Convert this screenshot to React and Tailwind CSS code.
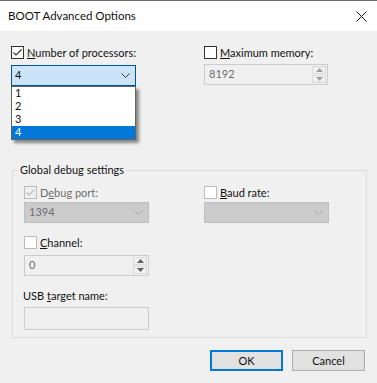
import React from 'react';

function Check({ checked = false, disabled = false }) {
  return (
    <span
      className={`w-[13px] h-[13px] shrink-0 border flex items-center justify-center ${
        disabled ? 'border-[#bcbcbc] bg-[#f0f0f0]' : 'border-[#333333] bg-white'
      }`}
    >
      {checked && (
        <svg width="11" height="11" viewBox="0 0 11 11">
          <path
            d="M1.5 5.5 L4 8 L9.5 2.5"
            fill="none"
            stroke={disabled ? '#bcbcbc' : '#333333'}
            strokeWidth="1.1"
          />
        </svg>
      )}
    </span>
  );
}

function LightCheck() {
  return <span className="w-[13px] h-[13px] shrink-0 border border-[#bcbcbc] bg-white" />;
}

function Chevron({ color = '#444444' }) {
  return (
    <svg width="9" height="5" viewBox="0 0 9 5">
      <path d="M0.5 0.5 L4.5 4.5 L8.5 0.5" fill="none" stroke={color} strokeWidth="1" />
    </svg>
  );
}

function SpinArrows({ color }) {
  return (
    <div className="w-[16px] h-full flex flex-col gap-[1px] p-[1px]">
      <div className="flex-1 border border-[#dadada] bg-[#f0f0f0] flex items-center justify-center">
        <svg width="7" height="4" viewBox="0 0 7 4">
          <path d="M0 4 L3.5 0 L7 4 Z" fill={color} />
        </svg>
      </div>
      <div className="flex-1 border border-[#dadada] bg-[#f0f0f0] flex items-center justify-center">
        <svg width="7" height="4" viewBox="0 0 7 4">
          <path d="M0 0 L3.5 4 L7 0 Z" fill={color} />
        </svg>
      </div>
    </div>
  );
}

function CheckRow({ children, check }) {
  return (
    <div className="h-[13px] flex items-center gap-[3px]">
      {check}
      <span className="leading-[13px]">{children}</span>
    </div>
  );
}

export default function App() {
  return (
    <div className="w-[377px] h-[383px] bg-[#f0f0f0] border-t border-[#6b6b6b] font-['Lato',sans-serif] text-[11px] text-[#111111] overflow-hidden">
      {/* title bar */}
      <div className="h-[30px] bg-white flex items-center justify-between pl-[8px] pr-[10px]">
        <span className="text-[11.5px]">BOOT Advanced Options</span>
        <svg width="11" height="11" viewBox="0 0 11 11">
          <path d="M0.5 0.5 L10.5 10.5 M10.5 0.5 L0.5 10.5" stroke="#111111" strokeWidth="1" />
        </svg>
      </div>

      <div className="pl-[11px] pt-[15px]">
        <div className="grid grid-cols-[193px_1fr]">
          <div>
            <CheckRow check={<Check checked />}>
              <span className="underline underline-offset-1">N</span>umber of processors:
            </CheckRow>
            <div className="relative mt-[6px] w-[125px]">
              <div className="h-[21px] border border-[#005499] bg-[#cce4f7] flex items-center justify-between pl-[3px] pr-[5px]">
                <span>4</span>
                <Chevron color="#333333" />
              </div>
              <div className="absolute left-0 top-[21px] w-[125px] border border-[#646464] bg-white shadow-[3px_3px_3px_rgba(0,0,0,0.45)] z-10">
                <div className="h-[13px] leading-[12px] pl-[3px]">1</div>
                <div className="h-[13px] leading-[12px] pl-[3px]">2</div>
                <div className="h-[13px] leading-[12px] pl-[3px]">3</div>
                <div className="h-[13px] leading-[12px] pl-[3px] bg-[#0078d7] text-white">4</div>
              </div>
            </div>
          </div>
          <div>
            <CheckRow check={<Check />}>
              <span className="underline underline-offset-1">M</span>aximum memory:
            </CheckRow>
            <div className="mt-[5px] w-[124px] h-[21px] border border-[#cccccc] bg-[#f0f0f0] flex items-center justify-between">
              <span className="pl-[4px] text-[#6d6d6d]">8192</span>
              <SpinArrows color="#a0a0a0" />
            </div>
          </div>
        </div>

        {/* group box */}
        <div className="relative ml-[1px] mt-[84px] w-[355px] h-[168px] border border-[#dcdcdc] pl-[11px] pt-[15px]">
          <span className="absolute left-[5px] top-[-8px] px-[2px] bg-[#f0f0f0] leading-[13px]">
            Global debug settings
          </span>
          <div className="grid grid-cols-[180px_1fr]">
            <div>
              <CheckRow check={<Check checked disabled />}>
                <span className="text-[#6d6d6d]">
                  D<span className="underline underline-offset-1">e</span>bug port:
                </span>
              </CheckRow>
              <div className="mt-[3px] w-[125px] h-[21px] border border-[#bfbfbf] bg-[#cccccc] flex items-center justify-between pl-[4px] pr-[5px]">
                <span className="text-[#6d6d6d]">1394</span>
                <Chevron color="#a8a8a8" />
              </div>
            </div>
            <div>
              <CheckRow check={<LightCheck />}>
                <span className="underline underline-offset-1">B</span>aud rate:
              </CheckRow>
              <div className="mt-[3px] w-[125px] h-[21px] border border-[#bfbfbf] bg-[#cccccc] flex items-center justify-end pr-[5px]">
                <Chevron color="#a8a8a8" />
              </div>
            </div>
          </div>

          <div className="mt-[13px]">
            <CheckRow check={<LightCheck />}>
              <span className="underline underline-offset-1">C</span>hannel:
            </CheckRow>
            <div className="mt-[6px] w-[125px] h-[21px] border border-[#cccccc] bg-[#f0f0f0] flex items-center justify-between">
              <span className="pl-[4px] text-[#6d6d6d]">0</span>
              <SpinArrows color="#606060" />
            </div>
          </div>

          <div className="mt-[13px] h-[13px] leading-[13px] -ml-[1px]">
            USB <span className="underline underline-offset-1">t</span>arget name:
          </div>
          <div className="mt-[5px] w-[125px] h-[23px] border border-[#cccccc] bg-[#f0f0f0]" />
        </div>

        <div className="mt-[12px] flex justify-end gap-[9px] pr-[12px]">
          <button className="w-[73px] h-[21px] border-2 border-[#0078d7] bg-[#e1e1e1] leading-none">
            OK
          </button>
          <button className="w-[73px] h-[21px] border border-[#adadad] bg-[#e1e1e1] leading-none">
            Cancel
          </button>
        </div>
      </div>
    </div>
  );
}
